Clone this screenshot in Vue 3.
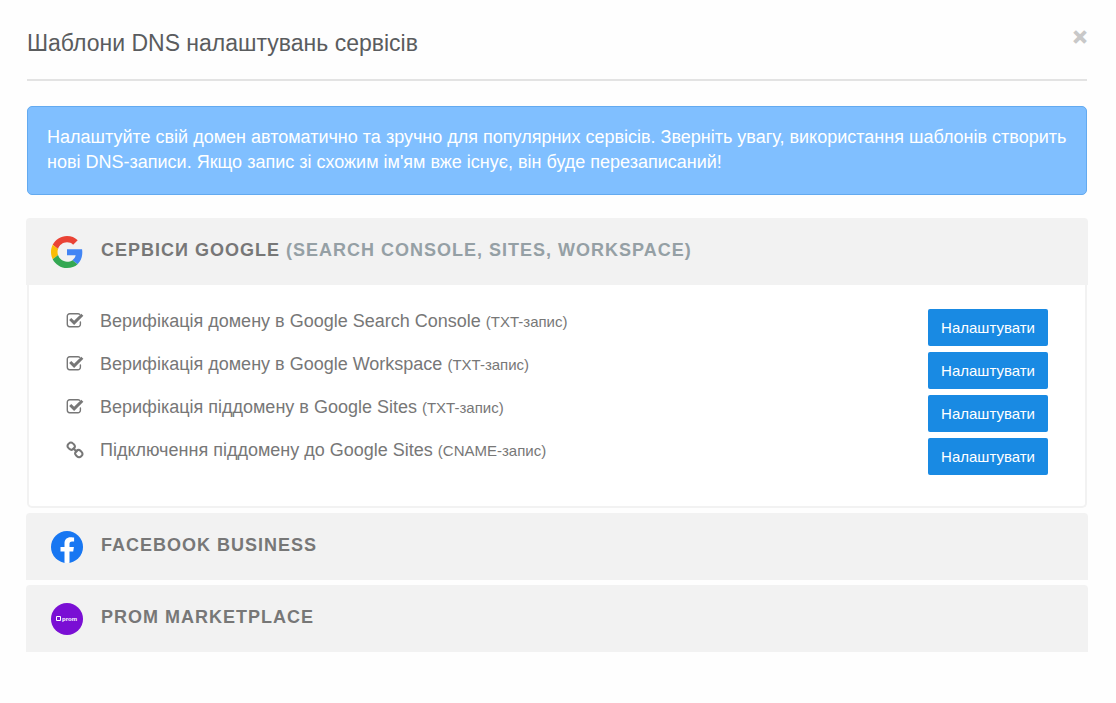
<script setup>
import { ref } from 'vue'

const open = ref('google')
const toggle = (id) => {
  open.value = open.value === id ? '' : id
}

const groups = [
  {
    id: 'google',
    title: 'Сервіси Google',
    note: '(Search Console, Sites, Workspace)',
    items: [
      { icon: 'check', name: 'Верифікація домену в Google Search Console', type: '(TXT-запис)' },
      { icon: 'check', name: 'Верифікація домену в Google Workspace', type: '(TXT-запис)' },
      { icon: 'check', name: 'Верифікація піддомену в Google Sites', type: '(TXT-запис)' },
      { icon: 'link', name: 'Підключення піддомену до Google Sites', type: '(CNAME-запис)' }
    ]
  },
  { id: 'facebook', title: 'Facebook Business', items: [] },
  { id: 'prom', title: 'Prom Marketplace', items: [] }
]
</script>

<template>
  <main class="dialog">
    <header class="dialog-head">
      <h1>Шаблони DNS налаштувань сервісів</h1>
      <button class="close" type="button" aria-label="Закрити">×</button>
    </header>

    <p class="notice">
      Налаштуйте свій домен автоматично та зручно для популярних сервісів. Зверніть увагу,
      використання шаблонів створить нові DNS-записи. Якщо запис зі схожим ім'ям вже існує, він буде
      перезаписаний!
    </p>

    <div class="accordion">
      <section v-for="g in groups" :key="g.id" class="group">
        <h2>
          <button class="group-head" type="button" :aria-expanded="open === g.id" @click="toggle(g.id)">
            <svg v-if="g.id === 'google'" class="logo" viewBox="0 0 48 48" aria-hidden="true">
              <path fill="#ea4335" d="M24 9.5c3.54 0 6.71 1.22 9.21 3.6l6.85-6.85C35.9 2.38 30.47 0 24 0 14.62 0 6.51 5.38 2.56 13.22l7.98 6.19C12.43 13.72 17.74 9.5 24 9.5z" />
              <path fill="#4285f4" d="M46.98 24.55c0-1.57-.15-3.09-.38-4.55H24v9.02h12.94c-.58 2.96-2.26 5.48-4.78 7.18l7.73 6c4.51-4.18 7.09-10.36 7.09-17.65z" />
              <path fill="#fbbc05" d="M10.53 28.59c-.48-1.45-.76-2.99-.76-4.59s.27-3.14.76-4.59l-7.98-6.19C.92 16.46 0 20.12 0 24c0 3.88.92 7.54 2.56 10.78l7.97-6.19z" />
              <path fill="#34a853" d="M24 48c6.48 0 11.93-2.13 15.89-5.81l-7.73-6c-2.15 1.45-4.92 2.3-8.16 2.3-6.26 0-11.57-4.22-13.47-9.91l-7.98 6.19C6.51 42.62 14.62 48 24 48z" />
            </svg>
            <svg v-else-if="g.id === 'facebook'" class="logo" viewBox="0 0 32 32" aria-hidden="true">
              <circle cx="16" cy="16" r="16" fill="#1877f2" />
              <path fill="#fff" d="M22.2 20.6l.7-4.6h-4.4v-3c0-1.3.6-2.5 2.6-2.5h2V6.6s-1.8-.3-3.6-.3c-3.6 0-6 2.2-6 6.2V16h-4v4.6h4v11.2a16 16 0 0 0 5 0V20.6z" />
            </svg>
            <svg v-else class="logo" viewBox="0 0 32 32" aria-hidden="true">
              <circle cx="16" cy="16" r="16" fill="#7a0fd4" />
              <path fill="none" stroke="#fff" d="M5.5 13.5h4v4h-4z" />
              <text class="wordmark" x="11" y="18">prom</text>
            </svg>
            <span>{{ g.title }} <span v-if="g.note" class="note">{{ g.note }}</span></span>
          </button>
        </h2>
        <ul v-if="open === g.id && g.items.length" class="items">
          <li v-for="item in g.items" :key="item.name">
            <svg v-if="item.icon === 'check'" class="mark" viewBox="0 0 18 18" aria-hidden="true">
              <path fill="none" stroke="currentColor" stroke-width="1.4" stroke-linecap="round" d="M13.6 2.2Q13 1.7 12 1.7H3.7a2.4 2.4 0 0 0-2.4 2.4v8.2a2.4 2.4 0 0 0 2.4 2.4H12a2.4 2.4 0 0 0 2.4-2.4V10" />
              <path fill="none" stroke="currentColor" stroke-width="3" d="M4.2 7l3.9 3.9 8.2-8.2" />
            </svg>
            <svg v-else class="mark" viewBox="0 0 18 18" aria-hidden="true">
              <g fill="none" stroke="currentColor" stroke-width="2">
                <rect x="1.6" y="2" width="7.2" height="6.4" rx="3.1" transform="rotate(45 5.2 5.2)" />
                <rect x="9.2" y="9.4" width="7.2" height="6.4" rx="3.1" transform="rotate(45 12.8 12.6)" />
                <path d="M6.8 6.8l4.4 4.4" />
              </g>
            </svg>
            <span class="label">{{ item.name }} <small>{{ item.type }}</small></span>
            <button class="setup" type="button" :aria-label="'Налаштувати: ' + item.name">Налаштувати</button>
          </li>
        </ul>
      </section>
    </div>
  </main>
</template>

<style>
body {
  margin: 0;
  background: #fefefe;
}
</style>

<style scoped>
.dialog {
  padding: 26px 29px 50px 27px;
  font-family: "Liberation Sans", Arial, sans-serif;
  color: #777;
}
.dialog-head {
  display: flex;
  justify-content: space-between;
  align-items: flex-start;
  padding-bottom: 19px;
  border-bottom: 2px solid #e3e3e3;
}
h1 {
  margin: 0;
  font-size: 23px;
  line-height: 34px;
  font-weight: 400;
  color: #5a5c5e;
}
button {
  border: 0;
  font-family: inherit;
  cursor: pointer;
}
.close {
  padding: 0;
  background: none;
  font-size: 24px;
  line-height: 22px;
  font-weight: 700;
  color: #c8c8c8;
  -webkit-text-stroke: 1px #c8c8c8;
}
.notice {
  margin: 25px 0 23px;
  padding: 18px 16px 19px 19px;
  border: 1px solid #63aaf0;
  border-radius: 5px;
  background: #80bfff;
  color: #fff;
  font-size: 18px;
  line-height: 25px;
}
.accordion {
  display: flex;
  flex-direction: column;
  gap: 5px;
  margin: 0 -1px;
}
h2 {
  margin: 0;
}
.group-head {
  display: flex;
  align-items: flex-start;
  gap: 18px;
  width: 100%;
  padding: 18px 25px 17px;
  border-radius: 4px 4px 0 0;
  background: #f2f2f2;
  color: #777;
  font-size: 18px;
  line-height: 28px;
  font-weight: 700;
  letter-spacing: 1px;
  text-align: left;
  text-transform: uppercase;
}
.logo {
  flex: none;
  width: 32px;
  height: 32px;
}
.wordmark {
  fill: #fff;
  font-size: 6px;
  font-weight: 700;
  letter-spacing: 0;
  text-transform: none;
}
.note {
  color: #95a0a5;
}
.items {
  display: flex;
  flex-direction: column;
  gap: 6px;
  margin: 0 1px;
  padding: 24px 37px 31px;
  border: 2px solid #f2f2f2;
  border-top: 0;
  border-radius: 0 0 5px 5px;
  background: #fff;
  list-style: none;
}
.items li {
  display: flex;
  align-items: flex-start;
}
.mark {
  flex: none;
  width: 18px;
  height: 18px;
  margin: 3px 16px 0 0;
}
.label {
  flex: 1;
  font-size: 18px;
  line-height: 24px;
}
small {
  font-size: 15px;
}
.setup {
  padding: 0 13px;
  border-radius: 2px;
  background: #198ae3;
  color: #fff;
  font-size: 15px;
  line-height: 37px;
}
</style>
